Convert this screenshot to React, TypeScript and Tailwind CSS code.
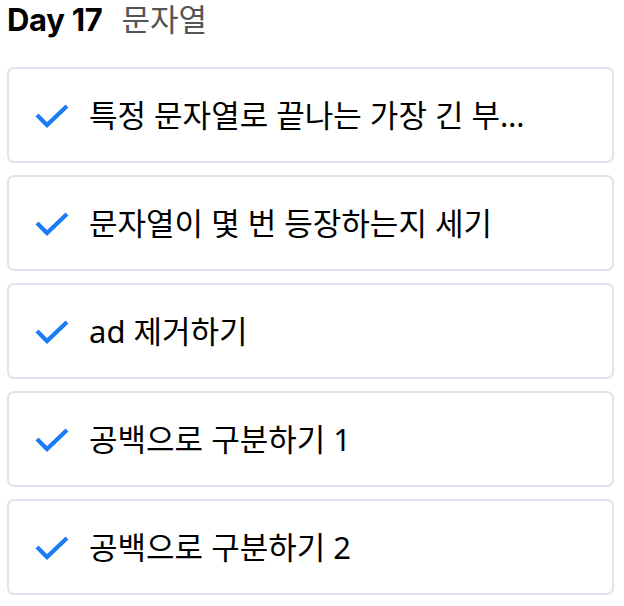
import * as React from "react";

const ITEMS = [
  "특정 문자열로 끝나는 가장 긴 부분 문자열 찾기",
  "문자열이 몇 번 등장하는지 세기",
  "ad 제거하기",
  "공백으로 구분하기 1",
  "공백으로 구분하기 2",
];

function Check() {
  return (
    <svg width="34" height="26" viewBox="0 0 34 26" className="flex-shrink-0">
      <polyline
        points="2,12 12,22 32,3"
        fill="none"
        stroke="#1a7cf4"
        strokeWidth="4.2"
        strokeLinecap="butt"
        strokeLinejoin="miter"
      />
    </svg>
  );
}

export default function App() {
  return (
    <div
      className="w-[624px] h-[606px] bg-white pl-[7px] pr-[10px]"
      style={{ fontFamily: '"Noto Sans", "Noto Sans CJK KR", sans-serif' }}
    >
      {/* Header */}
      <div className="flex items-baseline gap-[19px] h-[67px]">
        <span className="text-[31px] font-bold text-black leading-[38px] tracking-[-0.3px] font-[Inter,'Noto_Sans_CJK_KR',sans-serif]">
          Day 17
        </span>
        <span className="text-[31px] text-[#555] leading-[38px]">문자열</span>
      </div>

      {/* List */}
      <div className="flex flex-col gap-[12px]">
        {ITEMS.map((item, i) => (
          <div
            key={i}
            className="h-[96px] w-[607px] rounded-[7px] border-2 border-[#dce5ee] flex items-center pl-[26px] pr-[66px]"
          >
            <div className="mt-[1px]">
              <Check />
            </div>
            <span className="ml-[20px] text-[31px] text-black truncate leading-[40px]">
              {item}
            </span>
          </div>
        ))}
      </div>
    </div>
  );
}
